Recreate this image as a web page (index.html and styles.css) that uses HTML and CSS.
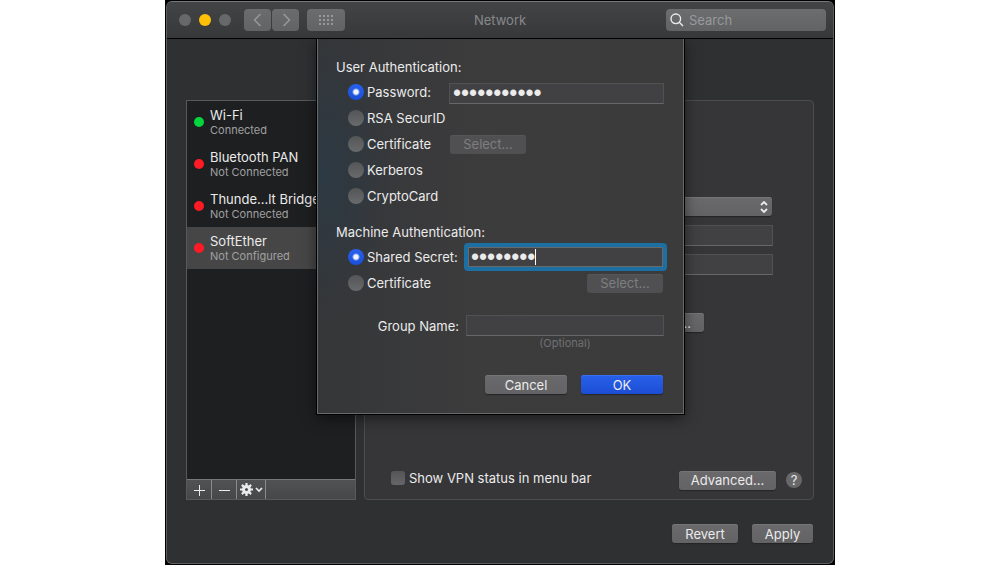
FILE: index.html
```html
<!DOCTYPE html>
<html lang="en">
<head>
<meta charset="utf-8">
<title>Network</title>
<link rel="stylesheet" href="styles.css">
</head>
<body>
<div class="desktop">
<main class="window">
  <header class="titlebar">
    <div class="lights">
      <button class="light" aria-label="Close"></button>
      <button class="light light-min" aria-label="Minimize"></button>
      <button class="light" aria-label="Zoom"></button>
    </div>
    <div class="nav">
      <button class="tool" aria-label="Back"><svg width="10" height="14" viewBox="0 0 10 14"><path d="M7.500 1 1.500 7l6 6"/></svg></button>
      <button class="tool" aria-label="Forward"><svg width="10" height="14" viewBox="0 0 10 14"><path d="M2.500 1 8.500 7l-6 6"/></svg></button>
    </div>
    <button class="tool tool-wide" aria-label="Show all">
      <svg width="14" height="10" viewBox="0 0 14 10"><path stroke-width="2" stroke-dasharray="2 2" d="M0 1h14M0 5h14M0 9h14"/></svg>
    </button>
    <h1 class="title">Network</h1>
    <label class="search">
      <svg width="14" height="14" viewBox="0 0 14 14"><circle cx="5.800" cy="5.800" r="4.800"/><path d="m9.300 9.300 3.700 3.700"/></svg>
      <input type="search" placeholder="Search" aria-label="Search">
    </label>
  </header>

  <div class="content">
    <div class="columns">
      <nav class="services">
        <ul class="service-list">
          <li class="service"><span class="status status-on"></span><div><div class="name">Wi-Fi</div><div class="state">Connected</div></div></li>
          <li class="service"><span class="status"></span><div><div class="name">Bluetooth PAN</div><div class="state">Not Connected</div></div></li>
          <li class="service"><span class="status"></span><div><div class="name">Thunde...lt Bridge</div><div class="state">Not Connected</div></div></li>
          <li class="service selected"><span class="status"></span><div><div class="name">SoftEther</div><div class="state">Not Configured</div></div></li>
        </ul>
        <div class="list-tools">
          <button class="list-tool" aria-label="Add service"><svg width="12" height="12" viewBox="0 0 12 12"><path d="M6.500 1v11M1 6.500h11"/></svg></button>
          <button class="list-tool" aria-label="Remove service"><svg width="12" height="12" viewBox="0 0 12 12"><path d="M1 6.500h11"/></svg></button>
          <button class="list-tool list-tool-menu" aria-label="Service actions">
            <svg width="13" height="13" viewBox="0 0 13 13"><circle cx="6.500" cy="6.500" r="3" stroke-width="3"/><path stroke-width="2.200" d="M6.500 0v3M6.500 10v3M0 6.500h3M10 6.500h3M1.900 1.900 4 4M9 9l2.100 2.100M11.100 1.900 9 4M4 9l-2.100 2.100"/></svg>
            <svg width="8" height="6" viewBox="0 0 8 6"><path stroke-width="1.700" d="m1 1 3 3 3-3"/></svg>
          </button>
        </div>
      </nav>

      <section class="panel">
        <div class="settings">
          <button class="push popup" aria-label="Configuration"><svg width="8" height="12" viewBox="0 0 8 12"><path d="m1 4 3-3 3 3M1 8l3 3 3-3"/></svg></button>
          <input class="field" type="text" aria-label="Server Address">
          <input class="field" type="text" aria-label="Account Name">
          <button class="push auth" aria-label="Authentication Settings">...</button>
        </div>
        <div class="panel-foot">
          <label class="check"><input type="checkbox">Show VPN status in menu bar</label>
          <button class="push advanced">Advanced...</button>
          <button class="help" aria-label="Help">?</button>
        </div>
      </section>
    </div>
    <footer class="footer">
      <button class="push revert">Revert</button>
      <button class="push apply">Apply</button>
    </footer>
  </div>

  <form class="sheet">
    <fieldset class="group">
      <legend class="heading">User Authentication:</legend>
      <div class="row"><label class="radio radio-narrow"><input type="radio" name="user" checked>Password:</label><input class="field grow password" type="password" value="abcdefghijk" aria-label="Password"></div>
      <div class="row"><label class="radio"><input type="radio" name="user">RSA SecurID</label></div>
      <div class="row"><label class="radio radio-narrow"><input type="radio" name="user">Certificate</label><button class="push select" type="button" disabled>Select...</button></div>
      <div class="row"><label class="radio"><input type="radio" name="user">Kerberos</label></div>
      <div class="row"><label class="radio"><input type="radio" name="user">CryptoCard</label></div>
    </fieldset>
    <fieldset class="group">
      <legend class="heading">Machine Authentication:</legend>
      <div class="row"><label class="radio radio-wide"><input type="radio" name="machine" checked>Shared Secret:</label><div class="focused grow"><input class="field password" type="password" value="abcdefgh" aria-label="Shared Secret"><span class="caret"></span></div></div>
      <div class="row spread"><label class="radio"><input type="radio" name="machine">Certificate</label><button class="push select" type="button" disabled>Select...</button></div>
    </fieldset>
    <div class="name-row">
      <label class="name-label" for="group-name">Group Name:</label>
      <input class="field" id="group-name" type="text">
      <span class="hint">(Optional)</span>
    </div>
    <div class="actions">
      <button class="push action" type="button">Cancel</button>
      <button class="push action primary" type="button">OK</button>
    </div>
  </form>
</main>
</div>
</body>
</html>
```
FILE: styles.css
```css
* { box-sizing: border-box; }

body {
  margin: 0;
  background: #fff;
  color: #ebebeb;
  font: 13px/16px Inter, "Liberation Sans", sans-serif;
}

button, input { font: inherit; color: inherit; margin: 0; }
button { padding: 0; border: 0; }
svg { fill: none; stroke: currentColor; flex: none; }

.desktop {
  display: flex;
  max-width: 670px;
  min-height: 100vh;
  margin: 0 auto;
  padding: 1px;
  background: #000;
}

.window {
  position: relative;
  flex: 1;
  display: flex;
  flex-direction: column;
  border: 1px solid #5c5d5f;
  border-top-color: #77787a;
  border-radius: 6px;
  background: #2e3032;
  overflow: hidden;
}

.titlebar {
  position: relative;
  display: flex;
  align-items: center;
  height: 37px;
  padding: 0 7px 0 12px;
  border-bottom: 1px solid #000;
  background: linear-gradient(#434446, #37383a);
}

.lights { display: flex; gap: 8px; margin-right: 13px; }
.light { width: 12px; height: 12px; border-radius: 50%; background: #67686a; }
.light-min { background: #ffc107; }
.nav { display: flex; gap: 1px; margin-right: 8px; }

.tool {
  display: grid;
  place-items: center;
  width: 27px;
  height: 22px;
  border-radius: 4px;
  background: linear-gradient(#6b6c6e, #626365);
  color: #98999b;
  stroke-width: 1.5;
}
.tool-wide { width: 38px; }

.title {
  position: absolute;
  left: 0;
  right: 0;
  margin: 0;
  text-align: center;
  font-size: 13px;
  font-weight: 400;
  color: #88898b;
  pointer-events: none;
}

.search {
  display: flex;
  align-items: center;
  gap: 5px;
  width: 160px;
  height: 22px;
  margin-left: auto;
  padding: 0 4px;
  border-radius: 4px;
  background: linear-gradient(#6c6d6f, #626365);
  stroke-width: 1.4;
}
.search input {
  flex: 1;
  min-width: 0;
  padding: 0;
  border: 0;
  outline: 0;
  background: none;
  appearance: none;
}
.search input::placeholder { color: #98999b; }

.content {
  flex: 1;
  display: flex;
  flex-direction: column;
  padding: 61px 19px 20px;
}

.columns {
  flex: 1;
  display: grid;
  grid-template-columns: 170px 1fr;
  gap: 8px;
}

.services {
  display: flex;
  flex-direction: column;
  border: 1px solid #58595b;
  background: #1e1f21;
}
.service-list { flex: 1; margin: 0; padding: 0; list-style: none; }
.service {
  display: flex;
  align-items: center;
  gap: 6px;
  height: 42px;
  padding: 0 7px;
}
.selected { background: #464646; }
.status { width: 10px; height: 10px; border-radius: 50%; background: #ff1a24; }
.status-on { background: #04d63c; }
.name { line-height: 16px; white-space: nowrap; }
.state { font-size: 11px; line-height: 14px; color: #a0a0a1; }

.list-tools {
  display: flex;
  height: 20px;
  border-top: 1px solid #77787a;
  background: linear-gradient(#515254, #464749);
}
.list-tool {
  display: flex;
  align-items: center;
  justify-content: center;
  gap: 2px;
  width: 25px;
  border-right: 1px solid #8a8b8d;
  background: none;
}
.list-tool-menu { width: 29px; }

.panel {
  display: flex;
  flex-direction: column;
  justify-content: space-between;
  padding: 96px 11px 9px 26px;
  border: 1px solid #4c4d4f;
  border-radius: 4px;
  background: #363638;
}

.settings {
  display: flex;
  flex-direction: column;
  align-items: flex-end;
  gap: 8px;
  padding-right: 29px;
}
.settings .field { width: 200px; }

.field {
  height: 21px;
  padding: 0 4px;
  border: 1px solid #505153;
  border-bottom-color: #666769;
  border-radius: 0;
  outline: 0;
  background: #414143;
}

.push {
  height: 19px;
  border-radius: 3px;
  background: linear-gradient(#6a6a6c, #636365);
  box-shadow: inset 0 1px #757577, 0 1px 1px #242426;
}
.popup {
  display: flex;
  align-items: center;
  justify-content: flex-end;
  width: 200px;
  margin: 0 1px 1px 0;
  padding-right: 4px;
  stroke-width: 1.8;
}
.auth {
  width: 160px;
  margin: 30px 69px 0 0;
  padding-right: 13px;
  text-align: right;
}

.panel-foot { display: flex; align-items: center; }
.check { display: flex; align-items: center; gap: 4px; margin: 0 auto 4px 0; }
.check input {
  appearance: none;
  width: 14px;
  height: 14px;
  border-radius: 3px;
  background: linear-gradient(#555557, #666668);
}
.advanced { width: 97px; }
.help {
  width: 16px;
  height: 16px;
  margin: 0 0 0 10px;
  border-radius: 50%;
  background: #68686a;
}

.footer {
  display: flex;
  justify-content: flex-end;
  gap: 14px;
  margin-top: 24px;
  padding-right: 1px;
}
.revert { width: 66px; }
.apply { width: 61px; }

.sheet {
  position: absolute;
  top: 37px;
  left: calc(50% - 183px);
  width: 367px;
  padding: 16px 19px 19px 18px;
  border: 1px solid #68696b;
  border-top: 0;
  background: radial-gradient(ellipse 80px 150px at 0 36%, #2c3943, #2c394300), linear-gradient(90deg, #353638, #3c3c3d 45%, #3b3b3c);
  box-shadow: 0 0 0 1px #000, 0 4px 14px #0008;
  clip-path: inset(0 -20px -20px -20px);
}

.group { min-width: 0; margin: 0 0 11px; padding: 0; border: 0; }
.heading { padding: 0; line-height: 24px; }
.row { display: flex; align-items: center; height: 26px; padding-left: 12px; }
.row > .field { margin-top: 2px; }
.spread { justify-content: space-between; }
.grow { flex: 1; min-width: 0; }
.radio { display: flex; align-items: center; gap: 3px; white-space: nowrap; }
.radio-narrow { width: 101px; }
.radio-wide { width: 116px; }
.radio input {
  appearance: none;
  width: 16px;
  height: 16px;
  border-radius: 50%;
  background: linear-gradient(#545557, #686a6c);
}
.radio input:checked {
  background: radial-gradient(circle, #f0f4ff 2px, transparent 4px), linear-gradient(#2860ee, #1b4fd8);
}
.password { padding: 0 3px; font: 23px/19px "Liberation Sans", sans-serif; }

.focused {
  position: relative;
  display: flex;
  margin-right: -3px;
  border: 4px solid #1b6fa3;
  border-radius: 4px;
}
.focused .field { width: 100%; height: 20px; padding: 0 2px; border-color: #68696b; }
.caret { position: absolute; top: 2px; left: 67px; width: 1px; height: 16px; background: #fff; }

.select { width: 76px; margin: 0 1px; }
.push:disabled { background: #505052; box-shadow: inset 0 1px #565658; color: #7e7e80; }

.name-row {
  display: grid;
  grid-template-columns: 123px 198px;
  align-items: center;
  gap: 0 7px;
  margin-top: 19px;
}
.name-label { text-align: right; }
.hint {
  grid-column: 2;
  text-align: center;
  font-size: 11px;
  line-height: 14px;
  color: #707072;
}

.actions {
  display: flex;
  justify-content: flex-end;
  gap: 14px;
  margin-top: 25px;
  padding-right: 1px;
}
.action { width: 82px; }
.primary { background: linear-gradient(#2860ea, #1c4ed4); box-shadow: inset 0 1px #3a6ff0, 0 1px 1px #242426; }
```
